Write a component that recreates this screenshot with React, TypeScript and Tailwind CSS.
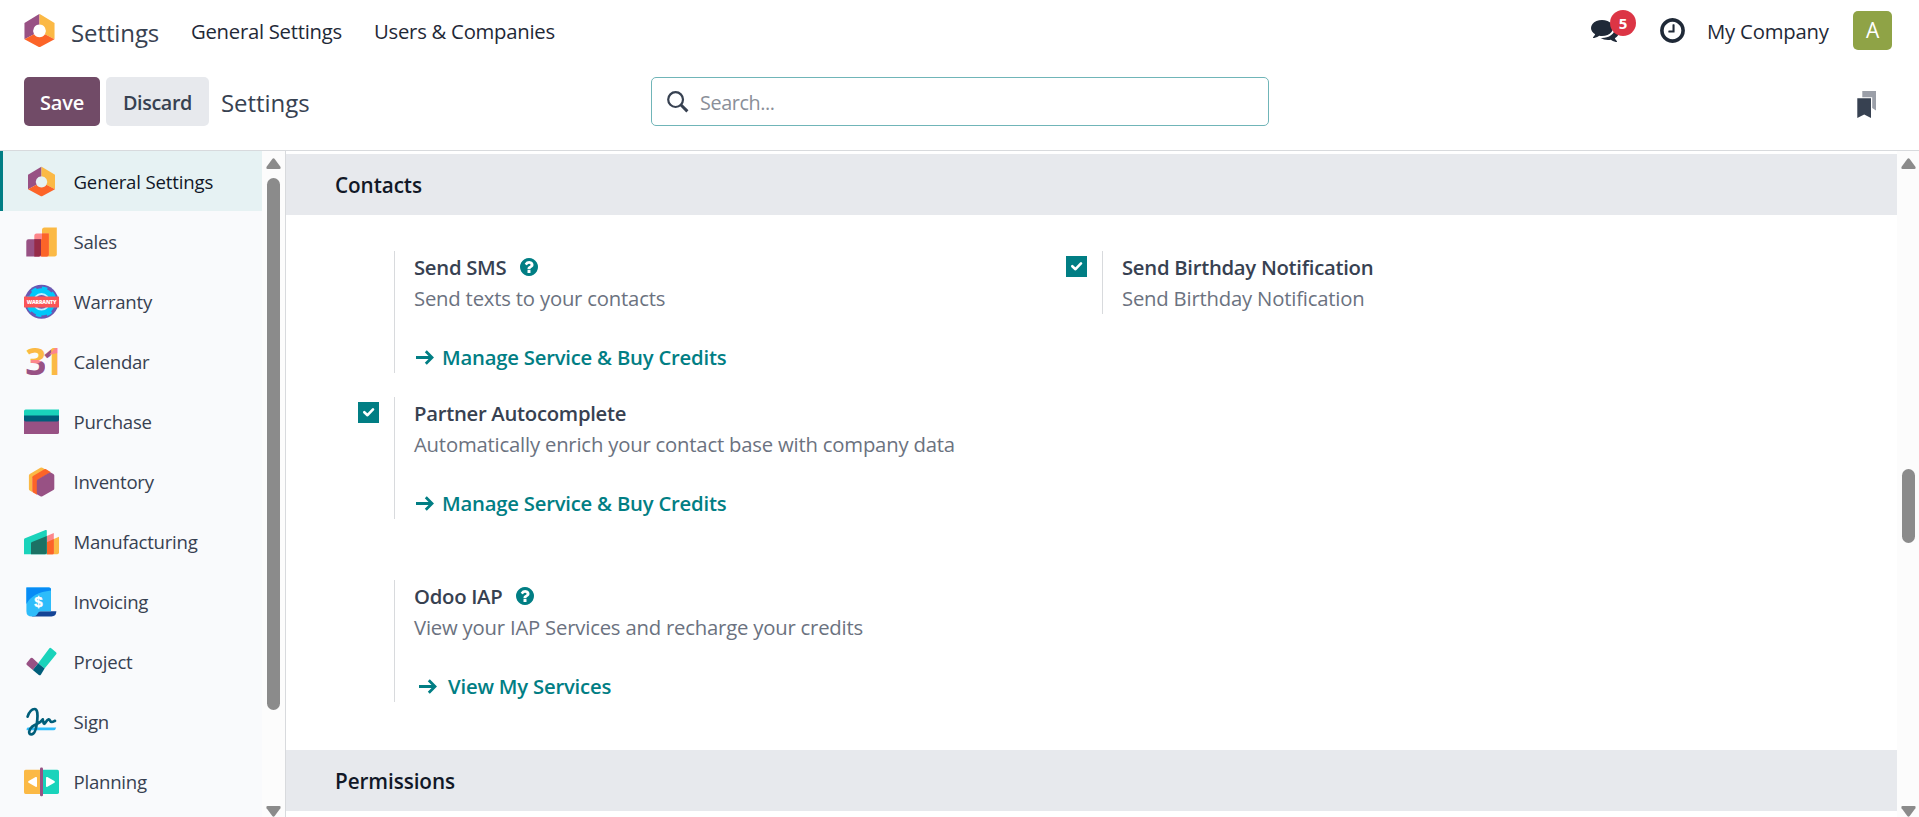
import type { ReactNode } from "react";

function HexLogo({ className }: { className: string }) {
  return (
    <svg viewBox="0 0 35 35" className={className}>
      <path d="M17.5 2.8V12.2A5.7 5.7 0 0 0 12.6 20.8L4 25.3V10.7L16.5 3.2Z" fill="#985184" />
      <path d="M17.5 2.8V12.2A5.7 5.7 0 0 1 22.4 20.8L31 25.3V10.7L18.5 3.2Z" fill="#fbb945" />
      <path d="M4 25.3 12.6 20.8A5.7 5.7 0 0 0 22.4 20.8L31 25.3 18.5 32.1Q17.5 32.6 16.5 32.1Z" fill="#fc6428" />
    </svg>
  );
}

const iconClass = "h-[35px] w-[35px] shrink-0 overflow-visible";

function SalesIcon() {
  return (
    <svg viewBox="0 0 35 35" className={iconClass}>
      <path d="M20.5 3.5H32.8V30.3A2.2 2.2 0 0 1 30.6 32.5H18V6A2.5 2.5 0 0 1 20.5 3.5Z" fill="#fbb945" />
      <path d="M12.5 9.5H24.8V30.5A2 2 0 0 1 22.8 32.5H10.3V11.7A2.2 2.2 0 0 1 12.5 9.5Z" fill="#fc868b" />
      <path d="M18 9.5H24.8V30.5A2 2 0 0 1 22.8 32.5H17V15.3H18Z" fill="#fc6428" />
      <path d="M4.5 15.3H17V30.3A2.2 2.2 0 0 1 14.8 32.5H2.3V17.5A2.2 2.2 0 0 1 4.5 15.3Z" fill="#985184" />
      <path d="M10.3 15.3H17V30.3A2.2 2.2 0 0 1 14.8 32.5H10.3Z" fill="#962b48" />
    </svg>
  );
}

function WarrantyIcon() {
  return (
    <svg viewBox="0 0 35 35" className={iconClass}>
      <circle cx="17.5" cy="17.8" r="17" fill="#6a58b3" />
      <circle cx="17.5" cy="17.8" r="13.6" fill="#00c8fa" />
      <circle cx="17.5" cy="17.8" r="13.8" fill="none" stroke="#00c8fa" strokeWidth="3" strokeDasharray="5.4 5.44" />
      <circle cx="17.5" cy="17.8" r="7.8" fill="#6a58b3" stroke="#bfeeff" strokeWidth="1.8" />
      <rect x="0" y="12.4" width="35" height="11" rx="0.6" fill="#fb5457" />
      <text
        x="17.5"
        y="19.9"
        textAnchor="middle"
        fill="#fff"
        fontSize="5.3"
        fontWeight="800"
        fontFamily="Open Sans, sans-serif"
      >
        WARRANTY
      </text>
    </svg>
  );
}

function CalendarIcon() {
  return (
    <svg viewBox="0 0 35 35" className={iconClass}>
      <defs>
        <pattern id="digits" x="0" y="0" width="40" height="40" patternUnits="userSpaceOnUse">
          <rect width="40" height="40" fill="#fbb945" />
          <rect y="16" width="20.5" height="4" fill="#fc868b" />
          <path d="M0 19.5H14L21 15V40H0Z" fill="#985184" />
          <rect x="20.6" width="6.6" height="20" fill="#985184" />
          <path d="M25.4 10.4 31 4H34V9L27 10.4Z" fill="#fc868b" />
        </pattern>
      </defs>
      <text
        x="1.2"
        y="31.2"
        fill="url(#digits)"
        fontSize="37"
        fontWeight="700"
        letterSpacing="-4"
        fontFamily="Open Sans, sans-serif"
      >
        31
      </text>
    </svg>
  );
}

function PurchaseIcon() {
  return (
    <svg viewBox="0 0 35 35" className={iconClass}>
      <path d="M0 16H35V28.5A1.6 1.6 0 0 1 33.4 30.1H0Z" fill="#985184" />
      <path d="M1.6 5.6H35V12H0V7.2A1.6 1.6 0 0 1 1.6 5.6Z" fill="#1ad3bb" />
      <path d="M0 11.4H35V15.8A1.8 1.8 0 0 1 33.2 17.6H1.8A1.8 1.8 0 0 1 0 15.8Z" fill="#005e7a" />
    </svg>
  );
}

function InventoryIcon() {
  return (
    <svg viewBox="0 0 35 35" className={iconClass}>
      <path d="M16.4 3.7Q17.4 3.1 18.4 3.7L22 5.8 8.2 14V28L5.8 26.6Q4.9 26.1 4.9 25V11.5Q4.9 10.5 5.8 10Z" fill="#fbb945" />
      <path d="M20.4 5.3Q21.3 4.9 22.1 5.3L27 8.3 13 16.4V30.7L9 28.4Q8.2 27.9 8.2 27V13.5Q8.2 12.5 9 12Z" fill="#fc6428" />
      <path d="M25.2 8.7Q26.2 8.1 27.2 8.7L29.4 10Q30.3 10.5 30.3 11.5V24.6Q30.3 25.6 29.4 26.1L18.4 32.3Q17.4 32.9 16.4 32.3L13.7 30.8Q12.8 30.3 12.8 29.2V17.2Q12.8 16 13.7 15.4Z" fill="#985184" />
    </svg>
  );
}

function ManufacturingIcon() {
  return (
    <svg viewBox="0 0 35 35" className={iconClass}>
      <path d="M22.8 18 35 12.8V28.5A1.7 1.7 0 0 1 33.3 30.2H22.8Z" fill="#fbb945" />
      <path d="M22.8 12 29.8 9V29A1.2 1.2 0 0 1 28.6 30.2H22.8Z" fill="#fc868b" />
      <path d="M22.8 18.2 29.8 15V29A1.2 1.2 0 0 1 28.6 30.2H22.8Z" fill="#fc6428" />
      <path d="M0 15.8Q0 14.7 1 14.3L21.5 6Q22.8 5.6 22.8 6.6V30.2H0Z" fill="#1ad3bb" />
      <path d="M7 19.3Q7 18.3 8 17.9L22.8 12V28.6A1.6 1.6 0 0 1 21.2 30.2H7Z" fill="#1c7164" />
    </svg>
  );
}

function InvoicingIcon() {
  return (
    <svg viewBox="0 0 35 35" className={iconClass}>
      <path d="M11.5 27.2H32.4Q32 32.4 27.5 32.4H8Z" fill="#144496" />
      <path d="M2.4 3.5H25A2 2 0 0 1 27 5.5V27.2H17A3 3 0 0 0 14 29Q12.5 32.5 8 32.5 2.4 32.5 2.4 27.2Z" fill="#2ebcfa" />
      <path d="M2.4 3.5H25A2 2 0 0 1 27 5.5V6.6Q8.5 8.5 2.4 20Z" fill="#088bf5" />
      <text
        x="14.4"
        y="23.1"
        textAnchor="middle"
        fill="#fff"
        stroke="#fff"
        strokeWidth="0.4"
        fontSize="15"
        fontWeight="700"
        fontFamily="Liberation Sans, sans-serif"
      >
        $
      </text>
    </svg>
  );
}

function ProjectIcon() {
  return (
    <svg viewBox="0 0 35 35" className={iconClass}>
      <path d="M25.2 4.4Q26.2 3.4 27.2 4.3L32 8.2Q33.1 9.2 32.2 10.3L20.6 24.6 14.2 19.3Z" fill="#1ad3bb" />
      <path d="M6.5 14.2Q7.5 13.2 8.5 14L14.2 19.3 8.8 26 2.9 20.9Q1.9 20 2.7 19Z" fill="#985184" />
      <path d="M14.2 19.3 20.6 24.6 17 30.4Q16 31.8 14.8 30.9L8.8 26Z" fill="#005e7a" />
    </svg>
  );
}

function SignIcon() {
  return (
    <svg viewBox="0 0 35 35" className={iconClass}>
      <path d="M3.6 23.4H32.2Q31.6 26.3 29.4 26.3H2.6Q2.2 24.2 3.6 23.4Z" fill="#2ebcfa" />
      <path
        d="M3.6 12.6C5 8.5 7.6 5 10.6 5 13.9 5 13.6 11.5 13.3 15.5 12.7 22.5 11 30.4 7.4 30.4 4 30.4 4.6 25.6 8.2 22.6 12 19.6 16.5 19.3 18.7 15.3 19.3 16.6 18.9 19.3 20.2 19.8 21.5 19.5 22.5 15.7 24.6 15.4 26.4 15.3 25.7 18 27.8 18 29.3 18 30 17.3 31 16.8"
        fill="none"
        stroke="#005e7a"
        strokeWidth="2.7"
        strokeLinecap="round"
        strokeLinejoin="round"
      />
    </svg>
  );
}

function PlanningIcon() {
  return (
    <svg viewBox="0 0 35 35" className={iconClass}>
      <path d="M1.6 5.8H17.5V29.9H1.6A1.6 1.6 0 0 1 0 28.3V7.4A1.6 1.6 0 0 1 1.6 5.8Z" fill="#fbb945" />
      <path d="M17.5 5.8H33.4A1.6 1.6 0 0 1 35 7.4V28.3A1.6 1.6 0 0 1 33.4 29.9H17.5Z" fill="#1ad3bb" />
      <rect x="16" y="3.5" width="3" height="28.8" rx="1.2" fill="#985184" />
      <path d="M4.6 17.1 11.6 13.1Q13 12.5 13 13.9V22Q13 23.4 11.6 22.8L4.6 18.8Q3.4 18 4.6 17.1ZM30.4 17.1 23.4 13.1Q22 12.5 22 13.9V22Q22 23.4 23.4 22.8L30.4 18.8Q31.6 18 30.4 17.1Z" fill="#fff" />
    </svg>
  );
}

function HelpIcon() {
  return (
    <svg viewBox="128 128 1536 1536" className="mt-1.5 h-[18px] w-[18px] fill-[#017e84]">
      <path d="M1024 1376v-192q0-14-9-23t-23-9h-192q-14 0-23 9t-9 23v192q0 14 9 23t23 9h192q14 0 23-9t9-23zm256-672q0-88-55.5-163t-138.5-116-170-41q-243 0-371 213-15 24 8 42l132 100q7 6 19 6 16 0 25-12 53-68 86-92 34-24 86-24 48 0 85.5 26t37.5 59q0 38-20 61t-68 45q-63 28-115.5 86.5t-52.5 125.5v36q0 14 9 23t23 9h192q14 0 23-9t9-23q0-19 21.5-49.5t54.5-49.5q32-18 49-28.5t46-35 44.5-48 28-60.5 12.5-81zm384 192q0 209-103 385.5t-279.5 279.5-385.5 103-385.5-103-279.5-279.5-103-385.5 103-385.5 279.5-279.5 385.5-103 385.5 103 279.5 279.5 103 385.5z" />
    </svg>
  );
}

function ArrowIcon() {
  return (
    <svg viewBox="0 0 18 15" className="mt-px h-[15px] w-[18px]">
      <path d="M0 7.5H15M9.8 1.3 16 7.5 9.8 13.7" fill="none" stroke="#017e84" strokeWidth="2.8" />
    </svg>
  );
}

function Checkbox() {
  return (
    <span className="flex h-[21px] w-[21px] items-center justify-center bg-[#017e84]">
      <svg viewBox="0 0 21 21" className="h-[21px] w-[21px]">
        <path
          d="M6.3 10.2 9.5 13.2 15 7.4"
          fill="none"
          stroke="#fff"
          strokeWidth="2.6"
          strokeLinecap="round"
          strokeLinejoin="round"
        />
      </svg>
    </span>
  );
}

function ScrollArrow({ down = false }: { down?: boolean }) {
  return (
    <svg viewBox="0 0 15 11" className={down ? "h-[11px] w-[15px] rotate-180" : "h-[11px] w-[15px]"}>
      <path d="M6.3 1.1Q7.5-.4 8.7 1.1L14.4 8.8Q15.2 10.9 13.4 10.9H1.6Q-.2 10.9.6 8.8Z" fill="#8b8b8b" />
    </svg>
  );
}

type Block = { title: string; desc: string; link?: string; wide?: boolean; help?: boolean; checked?: boolean };

function Setting({ title, desc, link, wide, help, checked }: Block) {
  return (
    <div className="flex">
      <div className="w-[52px] pt-[5px] pl-4">{checked && <Checkbox />}</div>
      <div className="border-l border-[#d8dadd] pt-px pl-[19px]">
        <div className="flex h-[30px] gap-[14px] leading-[30px] font-semibold tracking-[-0.28px] text-[#374151]">
          <span>{title}</span>
          {help && <HelpIcon />}
        </div>
        <div className="h-8 leading-8 whitespace-nowrap text-[#6b7280]">{desc}</div>
        {link && (
          <div
            className={
              wide
                ? "mt-7 mb-px flex h-[30px] items-center gap-[11px] pl-[5px] leading-[30px] font-semibold text-[#017e84]"
                : "mt-7 mb-px flex h-[30px] items-center gap-2 pl-0.5 leading-[30px] font-semibold tracking-[-0.22px] text-[#017e84]"
            }
          >
            <ArrowIcon />
            <span>{link}</span>
          </div>
        )}
      </div>
    </div>
  );
}

function SectionTitle({ children }: { children: ReactNode }) {
  return (
    <h2 className="h-[61px] shrink-0 bg-[#e7e9ed] pl-[49px] text-[20.7px] leading-[62px] font-semibold tracking-[-0.08px] text-[#111827]">
      {children}
    </h2>
  );
}

const apps: [string, ReactNode][] = [
  ["Sales", <SalesIcon />],
  ["Warranty", <WarrantyIcon />],
  ["Calendar", <CalendarIcon />],
  ["Purchase", <PurchaseIcon />],
  ["Inventory", <InventoryIcon />],
  ["Manufacturing", <ManufacturingIcon />],
  ["Invoicing", <InvoicingIcon />],
  ["Project", <ProjectIcon />],
  ["Sign", <SignIcon />],
  ["Planning", <PlanningIcon />],
];

export default function App() {
  return (
    <div className="flex h-[817px] flex-col overflow-hidden bg-white font-['Open_Sans','Noto_Sans',sans-serif] text-[20.3px] tracking-[-0.2px] text-[#374151]">
      <header className="flex h-[52px] shrink-0 items-start pt-px">
        <HexLogo className="mt-[10px] ml-[20px] h-[39px] w-[39px]" />
        <span className="ml-3 w-[120px] text-[24px] leading-[63px] tracking-[-0.1px]">Settings</span>
        <span className="w-[183px] leading-[60px] tracking-[-0.27px] text-[#1f2937]">General Settings</span>
        <span className="leading-[60px] tracking-[-0.25px] text-[#1f2937]">Users &amp; Companies</span>
        <div className="ml-auto flex items-start">
          <div className="relative mt-[15px] mr-[39px]">
            <svg viewBox="0 0 1792 1792" className="h-7 w-7 fill-[#1f2937]">
              <path d="M1408 768q0 139-94 257t-256.5 186.5-353.5 68.5q-86 0-176-16-124 88-278 128-36 9-86 16h-3q-11 0-20.5-8t-11.5-21q-1-3-1-6.5t.5-6.5 2-6l2.5-5 3.5-5.5 4-5 4.5-5 4-4.5q5-6 23-25t26-29.5 22.5-29 25-38.5 20.5-44q-124-72-195-177t-71-224q0-139 94-257t256.5-186.5 353.5-68.5 353.5 68.5 256.5 186.5 94 257zm384 256q0 120-71 224.5t-195 176.5q10 24 20.5 44t25 38.5 22.5 29 26 29.5 23 25q1 1 4 4.5t4.5 5 4 5 3.5 5.5l2.5 5 2 6 .5 6.5-1 6.5q-3 14-13 22t-22 7q-50-7-86-16-154-40-278-128-90 16-176 16-271 0-472-132 58 4 88 4 161 0 309-45t264-129q125-92 192-212t67-254q0-77-23-152 129 71 204 178t75 230z" />
            </svg>
            <span className="absolute -top-[6px] left-[19px] flex h-[26px] w-[26px] items-center justify-center rounded-full bg-[#dc3545] text-[15px] font-bold text-white">
              5
            </span>
          </div>
          <svg viewBox="0 0 1792 1792" className="mt-[15px] mr-5 h-[29px] w-[29px] fill-[#1f2937]">
            <path d="M1024 544v448q0 14-9 23t-23 9h-320q-14 0-23-9t-9-23v-64q0-14 9-23t23-9h224v-352q0-14 9-23t23-9h64q14 0 23 9t9 23zm416 352q0-148-73-273t-198-198-273-73-273 73-198 198-73 273 73 273 198 198 273 73 273-73 198-198 73-273zm224 0q0 209-103 385.5t-279.5 279.5-385.5 103-385.5-103-279.5-279.5-103-385.5 103-385.5 279.5-279.5 385.5-103 385.5 103 279.5 279.5 103 385.5z" />
          </svg>
          <span className="w-[146px] leading-[60px] text-[#1f2937]">My Company</span>
          <span className="mt-[10px] mr-[27px] flex h-[39px] w-[39px] items-center justify-center rounded-[5px] bg-[#8fa346] text-[21px] text-white">
            A
          </span>
        </div>
      </header>

      <div className="flex h-[99px] shrink-0 items-start border-b border-[#d8dadd] pt-[25px]">
        <button className="ml-6 h-[49px] w-[76px] rounded-[5px] bg-[#714b67] pt-px text-[20px] leading-[50px] font-semibold text-white">
          Save
        </button>
        <button className="ml-[6px] h-[49px] w-[103px] rounded-[5px] bg-[#e7e9ed] pt-px text-[19.8px] leading-[50px] font-semibold tracking-[-0.4px] text-[#374151]">
          Discard
        </button>
        <span className="ml-3 w-[430px] text-[24px] leading-[52px] tracking-[-0.05px]">Settings</span>
        <div className="flex h-[49px] w-[618px] items-center rounded-[5px] border border-[#70b5b8] pl-[15px]">
          <svg viewBox="0 0 22 22" className="h-[22px] w-[22px]">
            <circle cx="8.6" cy="8.6" r="7.4" fill="none" stroke="#374151" strokeWidth="2.2" />
            <path d="M13.8 13.8 20.4 20.4" stroke="#374151" strokeWidth="3" />
          </svg>
          <span className="ml-[11px] pt-0.5 text-[19.8px] leading-[47px] tracking-[-0.4px] text-[#8a8f99]">
            Search...
          </span>
        </div>
        <svg viewBox="0 0 19 27" className="mt-[14px] mr-[43px] ml-auto h-[27px] w-[19px]">
          <path d="M5.3 0H19V19.6L15.2 17V6.2H5.3Z" fill="#9b9fa8" />
          <path d="M0.3 7.3H14V27L7.2 23.4.3 27Z" fill="#374151" />
        </svg>
      </div>

      <div className="flex min-h-0 flex-1">
        <nav className="w-[262px] shrink-0 bg-[#f9fafc] text-[18.6px]">
          <div className="flex h-[60px] items-center border-l-[3px] border-[#017e84] bg-[#e6f2f3] pl-[21px] tracking-[-0.16px] text-[#111827]">
            <HexLogo className={iconClass} />
            <span className="ml-[14.5px] pt-0.5">General Settings</span>
          </div>
          {apps.map(([name, icon]) => (
            <div key={name} className="flex h-[60px] items-center pl-6 tracking-[-0.24px]">
              {icon}
              <span className="ml-[14.5px] pt-0.5">{name}</span>
            </div>
          ))}
        </nav>
        <div className="flex w-6 shrink-0 flex-col items-center border-r border-[#d8dadd] bg-[#fcfcfc] pt-[7px]">
          <ScrollArrow />
          <div className="mt-[9px] h-[532px] w-[13px] shrink-0 rounded-full bg-[#8b8b8b]" />
          <div className="mt-[96px]">
            <ScrollArrow down />
          </div>
        </div>

        <main className="flex min-w-0 flex-1 flex-col overflow-hidden pt-[3px]">
          <SectionTitle>Contacts</SectionTitle>
          <div className="grid shrink-0 grid-cols-[708px_1fr] items-start pt-9 pr-4 pb-12 pl-14">
            <Setting title="Send SMS" desc="Send texts to your contacts" link="Manage Service & Buy Credits" help />
            <Setting title="Send Birthday Notification" desc="Send Birthday Notification" checked />
            <div className="mt-6">
              <Setting
                title="Partner Autocomplete"
                desc="Automatically enrich your contact base with company data"
                link="Manage Service & Buy Credits"
                checked
              />
            </div>
            <div className="col-start-1 mt-[61px]">
              <Setting
                title="Odoo IAP"
                desc="View your IAP Services and recharge your credits"
                link="View My Services"
                help
                wide
              />
            </div>
          </div>
          <SectionTitle>Permissions</SectionTitle>
        </main>
        <div className="flex w-[22px] shrink-0 flex-col items-center bg-[#fcfcfc] pt-[7px]">
          <ScrollArrow />
          <div className="mt-[300px] h-[74px] w-[13px] shrink-0 rounded-full bg-[#8b8b8b]" />
          <div className="mt-[263px]">
            <ScrollArrow down />
          </div>
        </div>
      </div>
    </div>
  );
}
